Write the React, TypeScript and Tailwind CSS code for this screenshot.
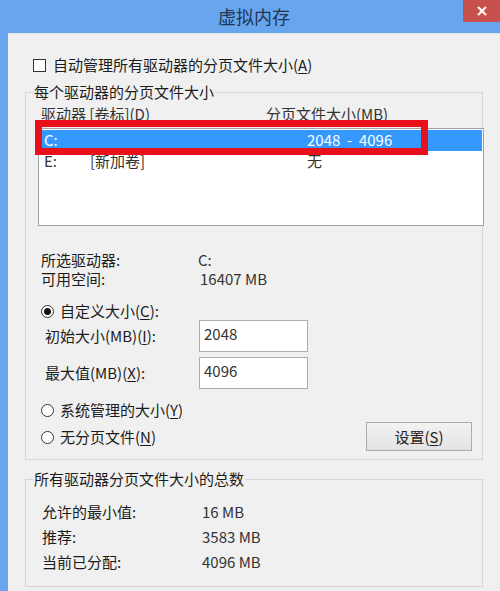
import React from "react";

const FONT = { fontFamily: '"Noto Sans CJK SC", "Noto Sans", sans-serif' };

function Key({ k }: { k: string }) {
  return (
    <>
      (<span className="underline underline-offset-2">{k}</span>)
    </>
  );
}

function Radio({ checked }: { checked?: boolean }) {
  return (
    <span className="w-[13px] h-[13px] rounded-full border border-[#333] bg-white flex items-center justify-center shrink-0">
      {checked && <span className="w-[7px] h-[7px] rounded-full bg-[#111]" />}
    </span>
  );
}

function Group({
  title,
  className,
  children,
}: {
  title: string;
  className: string;
  children: React.ReactNode;
}) {
  return (
    <div className={`relative ml-[17px] w-[458px] border border-[#d5d5d5] ${className}`}>
      <span className="absolute -top-[11px] left-[7px] px-[1px] leading-[20px] bg-[#f0f0f0]">
        {title}
      </span>
      {children}
    </div>
  );
}

export default function App() {
  return (
    <div
      className="relative w-[500px] h-[591px] overflow-hidden bg-[#67a6ee] text-[15px] text-[#1c1c1c]"
      style={FONT}
    >
      {/* title bar */}
      <div className="h-[33px] flex items-center justify-center">
        <span className="text-[18px] text-[#1f3550] ml-[8px]">虚拟内存</span>
      </div>
      <div className="absolute top-0 right-0 w-[37px] h-[22px] bg-[#c9514b] flex items-center justify-center">
        <svg width="10" height="10" viewBox="0 0 10 10">
          <path d="M1 1 L9 9 M9 1 L1 9" stroke="#fff" strokeWidth="2" />
        </svg>
      </div>

      {/* window body */}
      <div className="ml-[8px] h-[558px] bg-[#f0f0f0] border-t border-[#e6e6e6]">
        <div className="mt-[21px] h-[20px] flex items-center pl-[25px] gap-[7px]">
          <span className="w-[13px] h-[13px] border border-[#333] bg-white shrink-0" />
          <span className="leading-[20px]">
            自动管理所有驱动器的分页文件大小<Key k="A" />
          </span>
        </div>

        <Group title="每个驱动器的分页文件大小" className="mt-[17px] h-[368px]">
          <div className="pt-[11px] pl-[15px] flex leading-[20px] text-[#333]">
            <span className="w-[225px]">
              驱动器 [卷标]<Key k="D" />
            </span>
            <span>分页文件大小(MB)</span>
          </div>

          {/* list */}
          <div className="mt-[4px] ml-[12px] w-[446px] h-[98px] border border-[#9ea3aa] bg-white pt-[1px] px-[1px] text-[#333]">
            <div className="h-[21px] flex items-center bg-[#3399ff] text-white pl-[4px]">
              <span className="w-[263px]">C:</span>
              <span className="whitespace-pre">2048  -  4096</span>
            </div>
            <div className="h-[21px] flex items-center pl-[4px]">
              <span className="w-[46px]">E:</span>
              <span className="w-[217px]">[新加卷]</span>
              <span>无</span>
            </div>
          </div>

          <div className="mt-[24px] pl-[15px] leading-[19px]">
            <div className="flex">
              <span className="w-[157px]">所选驱动器:</span>
              <span className="text-[#333]">C:</span>
            </div>
            <div className="flex">
              <span className="w-[159px]">可用空间:</span>
              <span className="text-[#333]">16407 MB</span>
            </div>
          </div>

          <div className="mt-[14px] pl-[15px] h-[18px] flex items-center gap-[6px]">
            <Radio checked />
            <span>
              自定义大小<Key k="C" />:
            </span>
          </div>

          <div className="pl-[19px] h-[32px] flex items-center">
            <span className="w-[154px] pt-[1px]">
              初始大小(MB)<Key k="I" />:
            </span>
            <div className="w-[109px] h-[32px] border border-[#abadb3] bg-white px-[4px] pt-[3px] leading-[20px] text-[#333]">
              2048
            </div>
          </div>

          <div className="mt-[5px] pl-[19px] h-[32px] flex items-center">
            <span className="w-[154px] pt-[1px]">
              最大值(MB)<Key k="X" />:
            </span>
            <div className="w-[109px] h-[32px] border border-[#abadb3] bg-white px-[4px] pt-[3px] leading-[20px] text-[#333]">
              4096
            </div>
          </div>

          <div className="mt-[11px] pl-[15px] h-[20px] flex items-center gap-[6px]">
            <Radio />
            <span>
              系统管理的大小<Key k="Y" />
            </span>
          </div>

          <div className="mt-[2px] pl-[15px] pr-[10px] h-[29px] flex items-center justify-between">
            <div className="flex items-center gap-[6px] pt-[1px]">
              <Radio />
              <span>
                无分页文件<Key k="N" />
              </span>
            </div>
            <button className="w-[106px] h-[29px] border border-[#acacac] bg-linear-to-b from-[#f2f2f2] to-[#e3e3e3] text-[#222] leading-[20px]">
              设置<Key k="S" />
            </button>
          </div>
        </Group>

        <Group title="所有驱动器分页文件大小的总数" className="mt-[19px] h-[108px]">
          <div className="pt-[20px] pl-[16px]">
            {[
              ["允许的最小值:", "16 MB"],
              ["推荐:", "3583 MB"],
              ["当前已分配:", "4096 MB"],
            ].map(([label, value]) => (
              <div key={label} className="h-[25px] flex items-center">
                <span className="w-[160px]">{label}</span>
                <span className="text-[#333]">{value}</span>
              </div>
            ))}
          </div>
        </Group>
      </div>

      {/* red annotation box */}
      <div className="absolute left-[35px] top-[120px] w-[393px] h-[35px] border-[7px] border-[#e8101a]" />
    </div>
  );
}
